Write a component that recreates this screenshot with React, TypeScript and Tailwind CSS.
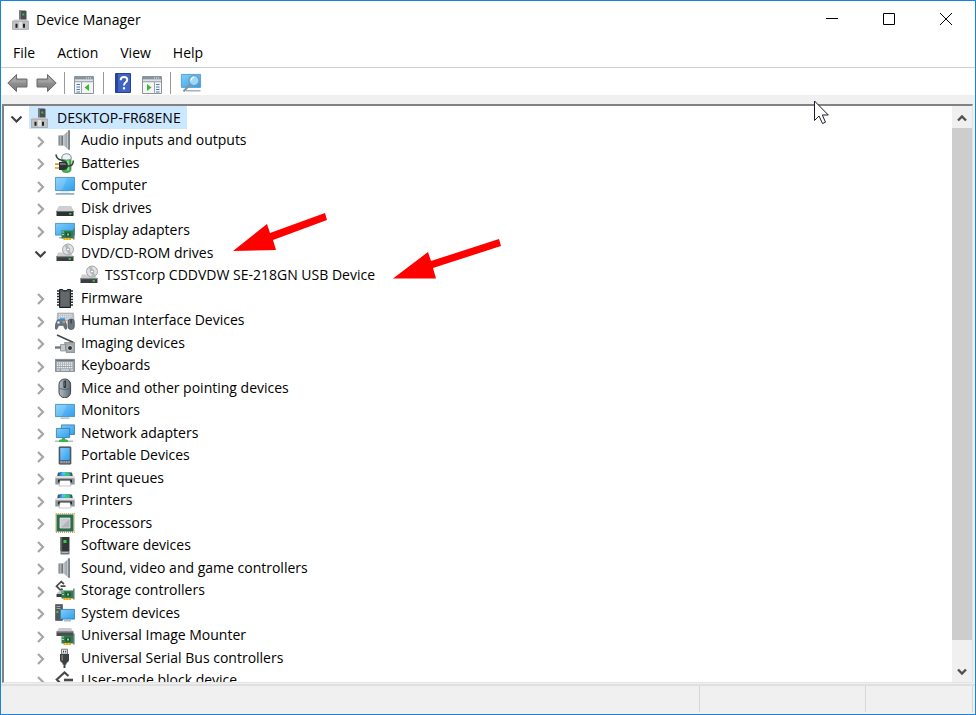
import { useState } from 'react';
import type { ReactNode } from 'react';

type IconName =
  | 'root' | 'audio' | 'battery' | 'computer' | 'disk' | 'display' | 'dvd' | 'firmware'
  | 'hid' | 'imaging' | 'keyboard' | 'mouse' | 'monitor' | 'network' | 'portable' | 'printer'
  | 'processor' | 'software' | 'storage' | 'system' | 'mounter' | 'usb' | 'block';

interface TreeNode {
  label: string;
  icon: IconName;
  level: 0 | 1 | 2;
  state?: 'open' | 'closed';
}

const nodes: TreeNode[] = [
  { label: 'DESKTOP-FR68ENE', icon: 'root', level: 0, state: 'open' },
  { label: 'Audio inputs and outputs', icon: 'audio', level: 1, state: 'closed' },
  { label: 'Batteries', icon: 'battery', level: 1, state: 'closed' },
  { label: 'Computer', icon: 'computer', level: 1, state: 'closed' },
  { label: 'Disk drives', icon: 'disk', level: 1, state: 'closed' },
  { label: 'Display adapters', icon: 'display', level: 1, state: 'closed' },
  { label: 'DVD/CD-ROM drives', icon: 'dvd', level: 1, state: 'open' },
  { label: 'TSSTcorp CDDVDW SE-218GN USB Device', icon: 'dvd', level: 2 },
  { label: 'Firmware', icon: 'firmware', level: 1, state: 'closed' },
  { label: 'Human Interface Devices', icon: 'hid', level: 1, state: 'closed' },
  { label: 'Imaging devices', icon: 'imaging', level: 1, state: 'closed' },
  { label: 'Keyboards', icon: 'keyboard', level: 1, state: 'closed' },
  { label: 'Mice and other pointing devices', icon: 'mouse', level: 1, state: 'closed' },
  { label: 'Monitors', icon: 'monitor', level: 1, state: 'closed' },
  { label: 'Network adapters', icon: 'network', level: 1, state: 'closed' },
  { label: 'Portable Devices', icon: 'portable', level: 1, state: 'closed' },
  { label: 'Print queues', icon: 'printer', level: 1, state: 'closed' },
  { label: 'Printers', icon: 'printer', level: 1, state: 'closed' },
  { label: 'Processors', icon: 'processor', level: 1, state: 'closed' },
  { label: 'Software devices', icon: 'software', level: 1, state: 'closed' },
  { label: 'Sound, video and game controllers', icon: 'audio', level: 1, state: 'closed' },
  { label: 'Storage controllers', icon: 'storage', level: 1, state: 'closed' },
  { label: 'System devices', icon: 'system', level: 1, state: 'closed' },
  { label: 'Universal Image Mounter', icon: 'mounter', level: 1, state: 'closed' },
  { label: 'Universal Serial Bus controllers', icon: 'usb', level: 1, state: 'closed' },
  { label: 'User-mode block device', icon: 'block', level: 1, state: 'closed' },
];

const indent = { 0: 'pl-[6px]', 1: 'pl-[30px]', 2: 'pl-[54px]' };

// Small green expansion card shared by several icons
const card = (
  <>
    <path d="M6.5 10.5h12v8h-12z" fill="#2f7d4c" />
    <path d="M18.2 8.5h1.3v11h-1.3z" fill="#5d6b73" />
    <path d="M10.5 12.5h5v4h-5z" fill="#1d4f33" />
    <path d="M12 13.5h2v2h-2z" fill="#7fd49a" />
    <path d="M7 11.5h2v1H7zM7 14h2v1H7z" fill="#9fd9b0" />
    <path d="M8.5 18h7.5v2H8.5z" fill="#f2a60d" />
    <path d="M10.5 18h.6v2h-.6zM13 18h.6v2H13z" fill="#ffe07a" />
  </>
);

const drawings: Record<IconName, ReactNode> = {
  root: (
    <>
      <path d="M7 .5h6.5l1 1V11H7z" fill="#4a4d4f" />
      <path d="M7 .5h2V11H7z" fill="#777b7e" />
      <path d="M10.3 3.500h2v2h-2z" fill="#2fc44a" />
      <path d="M2 9.500h13l1 2H1z" fill="#d9dadb" />
      <path d="M.5 11h16v8.500H.5z" fill="#bfc1c3" stroke="#94979a" strokeWidth=".6" />
      <path d="M3.500 13.800h2v4h-2zM11 13.800h2v4h-2z" fill="#1f2022" />
      <path d="M7 12h3v6.500H7z" fill="#e2e3e4" />
    </>
  ),
  audio: (
    <>
      <path d="M3.5 5.500h5v10h-5z" fill="#6c747a" />
      <path d="M4.500 6h2v9h-2z" fill="#aab1b6" />
      <path d="M8 5.500 13.500.8v18.700L8 15z" fill="url(#dm-cone)" />
      <path d="M13 .3h2v19.500h-2z" fill="#7b838a" />
      <path d="M12.600 1.500v17" stroke="#dfe3e5" strokeWidth=".7" />
    </>
  ),
  battery: (
    <>
      <path d="M7 4Q7 1 11.500 1T16 4v12.500q0 3-4.500 3T7 17z" fill="#3fb549" stroke="#2b7d34" strokeWidth=".7" />
      <path d="M7 4Q7.300.8 11.500.8T16 4v2.200q-4.500 1.500-9 0z" fill="#eef3f5" stroke="#7f8d96" strokeWidth=".7" />
      <path d="M13 7.500v10" stroke="#a6eba2" strokeWidth="1.400" />
      <path d="M1 1.500q.5 4.500 5 5.500 5 1 6 4M12.500 13q6 .5 5.800-5.500" fill="none" stroke="#3a3d40" strokeWidth="1.600" />
      <path d="M4 9h5q4 .5 4 4t-4 4H4z" fill="#2f3235" />
      <path d="M5 10.200h4q2 .3 2.500 1.500H5z" fill="#82888d" />
      <path d="M0 10.300h4V12H0zM0 14.200h4v1.600H0z" fill="#d99a1e" />
    </>
  ),
  computer: (
    <>
      <path d="M.4 2.400h19.200v13.200H.4z" fill="url(#dm-screen)" stroke="#3f86b5" strokeWidth=".8" />
      <path d="M1 3h11L7 15H1z" fill="#fff" opacity=".15" />
      <path d="M6 16h8l1 1.500H5z" fill="#dfe6ea" />
      <path d="M1 18h18l.5 1.700H.5z" fill="#93adc0" />
    </>
  ),
  disk: (
    <>
      <path d="M4 8.500h12l2.500 5h-17z" fill="#cfd0d1" stroke="#aeb0b2" strokeWidth=".5" />
      <path d="M1.500 13h17v5h-17z" fill="#2e3133" />
      <path d="M1.500 13h17v1h-17z" fill="#6a6e70" />
      <path d="M14 15h2.500v1.500H14z" fill="#38d13f" />
    </>
  ),
  display: (
    <>
      <path d="M.4 3.400h19.200v11.700H.4z" fill="url(#dm-screen)" stroke="#3f86b5" strokeWidth=".8" />
      <path d="M4 17h5v1.500H4z" fill="#a9bccb" />
      {card}
    </>
  ),
  dvd: (
    <>
      <path d="M3 9.500h12l3.500 4h-17z" fill="#cdcecf" />
      <circle cx="13" cy="6.500" r="5.500" fill="#dfe0e1" stroke="#a3a6a8" />
      <path d="M13 6.500 9.200 3a5 5 0 0 1 4-1.700zM13 6.500l3.800 3.500a5 5 0 0 1-4 1.500z" fill="#b8bbbd" />
      <circle cx="13" cy="6.500" r="1.600" fill="#fff" stroke="#85898c" strokeWidth=".8" />
      <path d="M1.500 13h17v5h-17z" fill="#3a3d3f" />
      <path d="M1.500 13h17v1.200h-17z" fill="#85888a" />
      <path d="M13.500 15.200H16v1.500h-2.500z" fill="#38d13f" />
    </>
  ),
  firmware: (
    <>
      <path d="M2 3h16M2 5.800h16M2 8.600h16M2 11.400h16M2 14.200h16M2 17h16" stroke="#2b2d2e" strokeWidth="1.500" />
      <path d="M4.500 1.500h3.200q.3 1.500 2.300 1.500t2.300-1.500h3.200v18h-11z" fill="#535759" stroke="#1d1f20" />
      <path d="M6 4h8v14H6z" fill="#63686b" />
    </>
  ),
  hid: (
    <>
      <path d="M2.500 3h16l.5 8h-17z" fill="#b9c0c6" stroke="#87909a" strokeWidth=".5" />
      <path d="M4 4.800h13M4 6.800h13M3.700 8.800h13.600" stroke="#eef1f3" strokeWidth=".9" strokeDasharray="1.300 .6" />
      <path d="M2.500 10Q6 8.500 9.500 10q2.500 3 2.500 8.500l-1.500 1Q9 18 8.500 15.500h-5Q3 18 1.500 19.500l-1.500-1Q0 13 2.500 10z" fill="#68727b" stroke="#495159" strokeWidth=".5" />
      <circle cx="3.500" cy="12.500" r="1.300" fill="#e5eaee" />
      <path d="M5 8.300h5v3.500H5z" fill="#2c92dd" />
      <path d="M7.500 11H10v2.300H7.500z" fill="#f28a2c" />
      <rect x="13" y="9" width="6.300" height="10.500" rx="3" fill="#6c757e" stroke="#434a51" strokeWidth=".7" />
      <path d="M16.100 9.500v4" stroke="#252a2f" />
    </>
  ),
  imaging: (
    <>
      <path d="m2 2 16.500 7.500" stroke="#45484a" strokeWidth="1.600" />
      <path d="M9.500 9.500h10V20h-8z" fill="#a4a9ac" stroke="#6d7275" strokeWidth=".6" />
      <path d="M5.500 11.500h5V18h-5z" fill="#c3c7c9" stroke="#74797c" strokeWidth=".6" />
      <path d="M0 13.300h6v2.400H0z" fill="#72787b" />
      <circle cx="15" cy="15" r="2.500" fill="#303335" stroke="#e6e8e9" strokeWidth=".8" />
    </>
  ),
  keyboard: (
    <>
      <path d="M.4 4.400h19.200v12H.4z" fill="#9da5ab" stroke="#727b82" strokeWidth=".8" />
      <path d="M1 5h18v1.200H1z" fill="#69747c" />
      <path d="M2 8h16M2 10.300h16M2 12.600h16" stroke="#eceff1" strokeWidth="1.400" strokeDasharray="1.400 .6" />
      <path d="M2 15h2.500M6 15h8M15.500 15H18" stroke="#eceff1" />
    </>
  ),
  mouse: (
    <>
      <rect x="4" y="1" width="11.600" height="18.700" rx="5.500" fill="url(#dm-mouse)" stroke="#3b4249" />
      <path d="M4.500 10.500q5.300 2 10.600 0" fill="none" stroke="#525b63" strokeWidth=".8" />
      <rect x="8.500" y="2.500" width="2.600" height="7.500" rx="1.300" fill="#23272b" />
      <path d="M9.800 3.500v5" stroke="#8c959c" strokeWidth=".7" />
    </>
  ),
  monitor: (
    <>
      <path d="M.4 4.400h19.200v12.200H.4z" fill="url(#dm-screen)" stroke="#3f86b5" strokeWidth=".8" />
      <path d="M1 5h11L7 16H1z" fill="#fff" opacity=".15" />
      <path d="M5.500 17.500h9v1.200h-9z" fill="#9cb1c1" />
    </>
  ),
  network: (
    <>
      <path d="M6.400 1.900h13.200v9.600H6.400z" fill="url(#dm-screen)" stroke="#3577a3" strokeWidth=".8" />
      <path d="M1.400 5.400h13.200v9.200H1.400z" fill="url(#dm-screen)" stroke="#3577a3" strokeWidth=".8" />
      <path d="M7 15h3v1.200q3.500.3 3.500 2.800h-10q0-2.500 3.500-2.800z" fill="#38b54a" />
      <path d="M0 17.500h4V19H0zM13 17.500h5V19h-5z" fill="#b6bcc0" />
    </>
  ),
  portable: (
    <>
      <rect x="4" y="1.800" width="12" height="17.400" rx=".8" fill="#55606a" stroke="#39434c" strokeWidth=".6" />
      <path d="M5.300 3h9.400v12H5.300z" fill="url(#dm-screen)" />
      <path d="M5.300 16h9.400v2.200H5.300z" fill="#9da8b1" />
      <path d="M7 17h1.500M9.500 17H11M12 17h1.500" stroke="#46515a" strokeWidth=".8" />
    </>
  ),
  printer: (
    <>
      <path d="M3 4.500h14L18 9H2z" fill="#4b5053" />
      <path d="M5 4h10l.8 4H4.200z" fill="#2a8ee0" />
      <path d="M10 4h4l.5 4H9.500z" fill="#36c95b" />
      <path d="M7 4h4l-1 3.500H6.500z" fill="#57b9f2" />
      <path d="M1 8h18l.7 3v5.500H.3V11z" fill="#8e9598" />
      <path d="M1 8h18l.5 2.300H.5z" fill="#dde0e2" />
      <path d="M3 11.500h14v3H3z" fill="#25292b" />
      <path d="M5 12.500h10l1 5.500H4z" fill="#fff" stroke="#8b9194" strokeWidth=".5" />
    </>
  ),
  processor: (
    <>
      <path d="M.8.800h18.400v18.400H.8z" fill="none" stroke="#caa64e" strokeWidth="1.400" strokeDasharray="1 1" />
      <path d="M1.500 1.500h17v17h-17z" fill="#2f6b4f" />
      <path d="M5 5h10v10H5z" fill="#cbcdce" stroke="#e8eceb" strokeWidth=".7" />
      <path d="M6 14.500 14.500 6v8.500z" fill="#b3b6b8" />
    </>
  ),
  software: (
    <>
      <path d="M5.500 2h9v14h-9z" fill="#333638" />
      <path d="M5.500 2h1.700v14H5.500z" fill="#5c6063" />
      <path d="M8.500 5h3v3h-3z" fill="#31d544" />
      <path d="M5.500 16h9v3.500h-9z" fill="#717578" />
      <path d="M6.500 17h7v1h-7z" fill="#b4b7b9" />
    </>
  ),
  storage: (
    <>
      <path d="M9 4 6.200 1.700 1.500 6.200 5.500 10.200l2-1.500M5.500 6.200h5" fill="none" stroke="#45494c" strokeWidth="1.700" />
      <path d="m2 13 3-2.500h4V17H2z" fill="#c4c7c9" />
      <path d="M1.500 14h8v3h-8z" fill="#3a3d3f" />
      {card}
    </>
  ),
  system: (
    <>
      <path d="M.5 1.500h7v16h-7z" fill="#53585b" stroke="#35393b" strokeWidth=".5" />
      <path d="M1.500 3.500h4M1.500 5.500h4" stroke="#a0a6a9" />
      <path d="M1.300 8h2v2h-2z" fill="#36cf45" />
      <path d="M5.400 6.400h14.200v9.700H5.400z" fill="url(#dm-screen)" stroke="#3577a3" strokeWidth=".8" />
      <path d="M9 17h7v1.500H9z" fill="#a9bccb" />
    </>
  ),
  mounter: (
    <>
      <path d="M4 3h12l2.500 4h-17z" fill="#c8cacc" />
      <path d="M1.500 6.500h17V11h-17z" fill="#4a4d50" />
      <path d="M1.500 6.500h17v1h-17z" fill="#8f9294" />
      {card}
    </>
  ),
  usb: (
    <>
      <path d="M6.500 1.200h6v5h-6z" fill="#e2e4e5" stroke="#5a5e60" strokeWidth=".8" />
      <path d="M8 2.800h1v1.700H8zM10.200 2.800h1v1.700h-1z" fill="#35393b" />
      <path d="M5 6h9v6q0 2-2.500 3v1.500h-4V15Q5 14 5 12z" fill="#3e4143" />
      <path d="M6.500 7H8v5.500H6.500z" fill="#777b7e" />
      <path d="M9.500 16v4" stroke="#3e4143" strokeWidth="2" />
    </>
  ),
  block: (
    <>
      <path d="M13.500 6 9.500 2.500 1.800 9.500l6.500 7 3-2.500" fill="none" stroke="#45494c" strokeWidth="2.200" />
      <path d="M9 10h9" stroke="#45494c" strokeWidth="2.600" />
    </>
  ),
};

function DeviceIcon({ name }: { name: IconName }) {
  return (
    <svg viewBox="0 0 20 20" className="h-5 w-5 shrink-0" aria-hidden="true">
      {drawings[name]}
    </svg>
  );
}

function Gradients() {
  return (
    <svg className="absolute h-0 w-0" aria-hidden="true">
      <defs>
        <linearGradient id="dm-screen" x1="0" y1="0" x2="1" y2="1">
          <stop offset="0" stopColor="#7fcdfb" />
          <stop offset="1" stopColor="#2f9fee" />
        </linearGradient>
        <linearGradient id="dm-cone">
          <stop offset="0" stopColor="#c9ced1" />
          <stop offset="1" stopColor="#8b9399" />
        </linearGradient>
        <linearGradient id="dm-mouse">
          <stop offset="0" stopColor="#b3bdc5" />
          <stop offset="1" stopColor="#5f6a74" />
        </linearGradient>
        <linearGradient id="dm-arrow" x1="0" y1="0" x2="0" y2="1">
          <stop offset="0" stopColor="#a3a3a3" />
          <stop offset="1" stopColor="#7b7b7b" />
        </linearGradient>
      </defs>
    </svg>
  );
}

function NavArrow({ flip }: { flip?: boolean }) {
  return (
    <svg viewBox="0 0 21 20" className={`h-5 w-[21px] ${flip ? '-scale-x-100' : ''}`} aria-hidden="true">
      <path
        d="M.8 10 9.500 1.500V6H20v8H9.500v4.500z"
        fill="url(#dm-arrow)"
        stroke="#6b6b6b"
        strokeLinejoin="round"
      />
      <path d="M3 9.500 8.500 4v3.200H19v2.300z" fill="#fff" opacity=".15" />
    </svg>
  );
}

function PaneIcon({ flip }: { flip?: boolean }) {
  return (
    <svg viewBox="0 0 20 18" className="h-[18px] w-5" aria-hidden="true">
      <path d="M.5.5h19v17H.5z" fill="#f4f5f6" stroke="#8d959c" />
      <path d="M1 1h18v2.500H1z" fill="#8a949e" />
      <path d="M14 2h1M16 2h1M12 2h1" stroke="#e9ecee" />
      <path d="M1 5.500h18" stroke="#a5adb4" strokeWidth="1.500" />
      <g className={flip ? 'origin-center -scale-x-100' : ''}>
        <path d="M7.500 6v11.500" stroke="#9aa3aa" />
        <path d="M2.500 8.500H6M2.500 11H6M2.500 13.500H6M2.500 16H6" stroke="#4a7bb5" />
        <path d="M15 8v7l-4.500-3.500z" fill="#3bb82f" />
      </g>
    </svg>
  );
}

function Separator() {
  return <span className="h-[22px] w-px bg-[#9a9a9a]" />;
}

function Toolbar() {
  return (
    <div role="toolbar" className="flex h-[27px] items-center bg-white pt-[3px] pl-[6px]">
      <button type="button" aria-label="Back">
        <NavArrow />
      </button>
      <button type="button" aria-label="Forward" className="mr-[7px] ml-2">
        <NavArrow flip />
      </button>
      <Separator />
      <button type="button" aria-label="Show or hide console tree" className="mx-[9px] mt-[3px]">
        <PaneIcon />
      </button>
      <Separator />
      <button type="button" aria-label="Help" className="mx-[11px]">
        <svg viewBox="0 0 16 20" className="h-5 w-4" aria-hidden="true">
          <path d="M.5.5h15v19H.5z" fill="#3e63c4" stroke="#24429a" />
          <path d="M1 1h2v18H1z" fill="#2846a0" />
          <path
            d="M5.700 7.200Q5.700 4 9 4t3.200 2.800q0 1.500-1.700 2.700Q9 10.600 9 12.500"
            fill="none"
            stroke="#fff"
            strokeWidth="2"
          />
          <path d="M7.900 14.200h2.200v2.200H7.900z" fill="#fff" />
        </svg>
      </button>
      <button type="button" aria-label="Show or hide action pane" className="mt-[3px] mr-[8px]">
        <PaneIcon flip />
      </button>
      <Separator />
      <button type="button" aria-label="Scan for hardware changes" className="ml-[9px]">
        <svg viewBox="0 0 22 20" className="h-5 w-[22px]" aria-hidden="true">
          <path d="M1.400 1.400h19.200v13H1.400z" fill="url(#dm-screen)" stroke="#4e93bf" strokeWidth=".8" />
          <path d="M6 17h14.500v1.500H6z" fill="#9fb2c0" />
          <path d="m10.500 11-7 7.500" stroke="#87939c" strokeWidth="2" />
          <circle cx="14" cy="7.500" r="5" fill="#9fd8f8" stroke="#6f9cb8" strokeWidth="1.200" />
          <path d="M11 7.500q.3-3 3-3" fill="none" stroke="#fff" strokeWidth="1.200" />
        </svg>
      </button>
    </div>
  );
}

function Chevron({ open }: { open: boolean }) {
  return (
    <svg viewBox="0 0 12 12" className="h-3 w-3" fill="none" strokeWidth="2.200" aria-hidden="true">
      {open ? (
        <path d="m1.500 3.500 5 5 5-5" stroke="#404040" />
      ) : (
        <path d="m4 1 5 5-5 5" stroke="#a6a6a6" />
      )}
    </svg>
  );
}

function TreeRow({ node, selected, onSelect }: { node: TreeNode; selected: boolean; onSelect: () => void }) {
  return (
    <li
      role="treeitem"
      aria-level={node.level + 1}
      aria-selected={selected}
      aria-expanded={node.state ? node.state === 'open' : undefined}
      onClick={onSelect}
      className={`flex items-center odd:h-[23px] even:h-[22px] ${indent[node.level]}`}
    >
      {node.state ? (
        <button type="button" aria-label={`Toggle ${node.label}`} className="mr-[7px] w-3 pt-[3px]">
          <Chevron open={node.state === 'open'} />
        </button>
      ) : (
        <span className="mr-[7px] w-3" />
      )}
      <span className={`flex h-full items-center gap-[6px] pr-[6px] pl-[2px] ${selected ? 'bg-[#cce8ff]' : ''}`}>
        <DeviceIcon name={node.icon} />
        <span className="whitespace-nowrap">{node.label}</span>
      </span>
    </li>
  );
}

function ScrollBar() {
  return (
    <div className="flex w-5 shrink-0 flex-col bg-[#f0f0f0]">
      <button type="button" aria-label="Scroll up" className="flex h-[22px] items-center justify-center pt-[2px]">
        <svg viewBox="0 0 10 8" className="h-2 w-[10px]" aria-hidden="true">
          <path d="m1 6.500 4-4 4 4" fill="none" stroke="#505050" strokeWidth="2.400" />
        </svg>
      </button>
      <div className="flex-[26] bg-[#cdcdcd]" />
      <div className="flex-1" />
      <button type="button" aria-label="Scroll down" className="flex h-[22px] items-center justify-center pt-[2px]">
        <svg viewBox="0 0 10 8" className="h-2 w-[10px]" aria-hidden="true">
          <path d="m1 1.500 4 4 4-4" fill="none" stroke="#505050" strokeWidth="2.400" />
        </svg>
      </button>
    </div>
  );
}

function TitleBar() {
  const control = 'flex h-full w-[57px] items-center justify-center pb-[2px] hover:bg-gray-200';
  return (
    <header className="flex h-[37px] items-center bg-white pr-px pl-[11px]">
      <DeviceIcon name="root" />
      <h1 className="ml-1 flex-1">Device Manager</h1>
      <button type="button" aria-label="Minimize" className={control}>
        <svg viewBox="0 0 12 12" className="h-3 w-3" aria-hidden="true">
          <path d="M0 5.500h12" stroke="#000" />
        </svg>
      </button>
      <button type="button" aria-label="Maximize" className={control}>
        <svg viewBox="0 0 12 12" className="h-3 w-3" aria-hidden="true">
          <path d="M.5.5h11v11H.5z" fill="none" stroke="#000" />
        </svg>
      </button>
      <button type="button" aria-label="Close" className={control}>
        <svg viewBox="0 0 12 12" className="h-3 w-3" aria-hidden="true">
          <path d="m0 0 12 12M12 0 0 12" stroke="#000" />
        </svg>
      </button>
    </header>
  );
}

export default function App() {
  const [selected, setSelected] = useState(0);

  return (
    <div className="relative flex h-screen w-full flex-col overflow-hidden border border-[#1883d7] bg-[#f0f0f0] font-['Open_Sans','Noto_Sans',sans-serif] text-[14px] leading-5 text-black">
      <Gradients />
      <TitleBar />

      <nav className="flex h-[30px] items-center gap-[22px] border-b border-[#ccced2] bg-white pl-3">
        {['File', 'Action', 'View', 'Help'].map((item) => (
          <button key={item} type="button">
            {item}
          </button>
        ))}
      </nav>

      <Toolbar />

      {/* Device tree */}
      <main className="mt-[9px] mr-[2px] ml-px flex min-h-0 flex-1 border-t-2 border-r border-b border-l-2 border-t-[#828282] border-r-[#e3e3e3] border-b-[#e3e3e3] border-l-[#828282] bg-white">
        <ul role="tree" aria-label="Devices" className="min-w-0 flex-1 overflow-hidden">
          {nodes.map((node, i) => (
            <TreeRow
              key={node.label}
              node={node}
              selected={selected === i}
              onSelect={() => setSelected(i)}
            />
          ))}
        </ul>
        <ScrollBar />
      </main>

      {/* Status bar */}
      <footer className="mt-px flex h-[30px] justify-end border-t-2 border-[#dfdfdf] pr-[2px] pb-[2px]">
        <div className="w-[166px] border-l border-[#d7d7d7]" />
        <div className="w-[108px] border-x border-[#d7d7d7]" />
      </footer>

      {/* Annotation arrows */}
      <svg viewBox="0 0 96 42" className="absolute top-[210px] left-[231px] h-[42px] w-24" aria-hidden="true">
        <path d="M1 40 35 13l3 9 55-20 2 7-54 20 3 10z" fill="#f00" />
      </svg>
      <svg viewBox="0 0 110 42" className="absolute top-[237px] left-[391px] h-[42px] w-[110px]" aria-hidden="true">
        <path d="M1 40.500 36 14l3 9 68-22 2 7-68 22 3 10.500z" fill="#f00" />
      </svg>

      {/* Mouse pointer */}
      <svg viewBox="0 0 16 25" className="absolute top-[99px] left-[813px] h-[25px] w-4" aria-hidden="true">
        <path
          d="M.5 1v19.500l4.500-4.500 3.500 7.500 3-1.300L8.300 15h6z"
          fill="#fff"
          stroke="#1b1b2b"
        />
      </svg>
    </div>
  );
}
